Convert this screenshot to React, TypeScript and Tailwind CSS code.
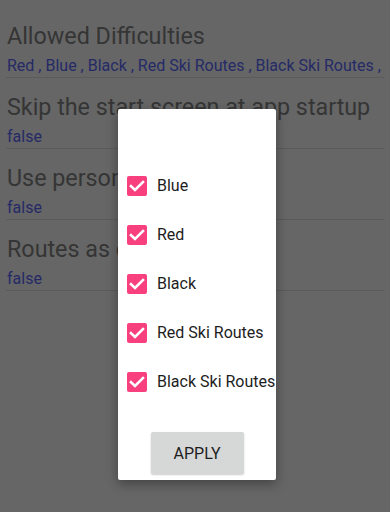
const prefs = [
  { title: 'Allowed Difficulties', value: 'Red , Blue , Black , Red Ski Routes , Black Ski Routes ,' },
  { title: 'Skip the start screen at app startup', value: 'false' },
  { title: 'Use personal data', value: 'false' },
  { title: 'Routes as circles', value: 'false' },
]

const options = ['Blue', 'Red', 'Black', 'Red Ski Routes', 'Black Ski Routes']

function CheckBox() {
  return (
    <span className="flex h-[20px] w-[20px] shrink-0 items-center justify-center rounded-[2px] bg-[#f8407f]">
      <svg viewBox="0 0 20 20" className="h-[20px] w-[20px]" fill="none">
        <path d="M4 10.2 L8 14 L16 6" stroke="#ffffff" strokeWidth="2.6" strokeLinecap="square" />
      </svg>
    </span>
  )
}

export default function App() {
  return (
    <div
      className="relative h-[512px] w-full overflow-hidden bg-[#666666]"
      style={{ fontFamily: 'Roboto, "Noto Sans", sans-serif' }}
    >
      <div className="px-[6px] pt-[7px]">
        {prefs.map((p) => (
          <div key={p.title} className="border-b border-[#5b5b5b] pt-[16px] pb-[1px]">
            <div className="whitespace-nowrap pl-[1px] text-[23.3px] leading-[26px] text-[#353535]">{p.title}</div>
            <div className="mt-[7px] whitespace-nowrap pl-[1px] text-[16px] leading-[20px] text-[#252a66]">
              {p.value}
            </div>
          </div>
        ))}
      </div>

      <div className="absolute left-[118px] top-[109px] flex h-[371px] w-[158px] flex-col overflow-hidden rounded-[2px] bg-white shadow-[0_4px_12px_rgba(0,0,0,0.35)]">
        <div className="pt-[52px]">
          {options.map((o) => (
            <div key={o} className="flex h-[49px] items-center gap-[10px] pl-[9px]">
              <CheckBox />
              <span className="whitespace-nowrap text-[16px] leading-[20px] text-[#1d1d1d]">{o}</span>
            </div>
          ))}
        </div>
        <div className="mt-[26px] flex justify-center">
          <button className="h-[42px] w-[93px] rounded-[2px] bg-[#d6d7d7] pt-[2px] text-[16px] text-[#1d1d1d] shadow-[0_1px_2px_rgba(0,0,0,0.2)]">
            APPLY
          </button>
        </div>
      </div>
    </div>
  )
}
